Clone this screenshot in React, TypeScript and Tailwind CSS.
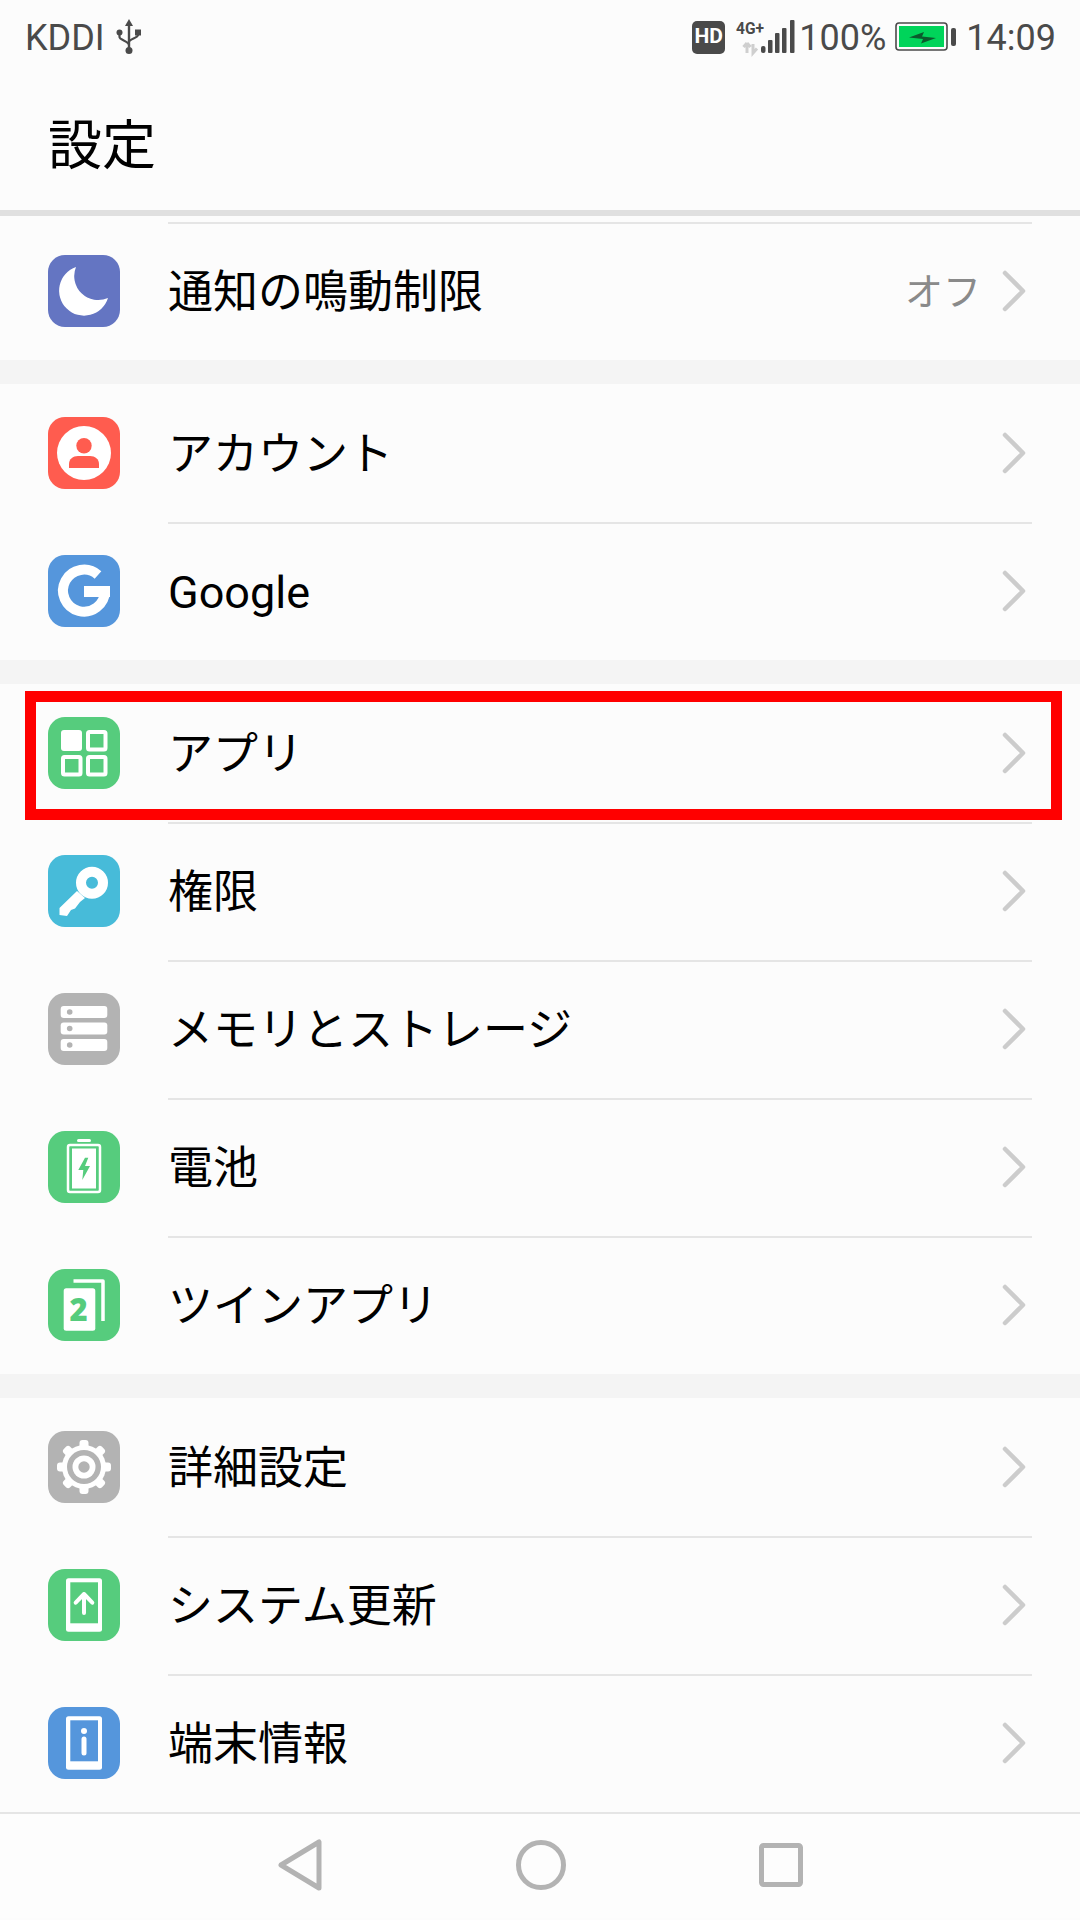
import React from 'react';

const Tile: React.FC<{ color: string; children: React.ReactNode }> = ({ color, children }) => (
  <svg width="72" height="72" viewBox="0 0 72 72" className="shrink-0">
    <rect width="72" height="72" rx="17" fill={color} />
    {children}
  </svg>
);

const GREEN = '#56cc7d';
const BLUE = '#5596dc';
const GRAY = '#b3b3b3';

const MoonIcon = () => (
  <Tile color="#6475c2">
    <path d="M28 12A25 25 0 1 0 60 43A24 24 0 0 1 28 12Z" fill="#fff" />
  </Tile>
);

const AccountIcon = () => (
  <Tile color="#ff5c4f">
    <circle cx="36" cy="36" r="27" fill="#fff" />
    <circle cx="36" cy="28.7" r="7.7" fill="#ff5c4f" />
    <path d="M21 51V47C21 42 25 39 30 39H42C47 39 51 42 51 47V51Z" fill="#ff5c4f" />
  </Tile>
);

const GoogleIcon = () => (
  <Tile color={BLUE}>
    <path d="M50 20A21 21 0 1 0 57 36" fill="none" stroke="#fff" strokeWidth="10" />
    <rect x="36" y="31" width="26" height="11" fill="#fff" />
  </Tile>
);

const AppsIcon = () => (
  <Tile color={GREEN}>
    <rect x="13" y="13" width="21" height="21" rx="3" fill="#fff" />
    <rect x="40" y="15" width="17.5" height="17.5" rx="1.5" fill="none" stroke="#fff" strokeWidth="4" />
    <rect x="15" y="40" width="17.5" height="17.5" rx="1.5" fill="none" stroke="#fff" strokeWidth="4" />
    <rect x="40" y="40" width="17.5" height="17.5" rx="1.5" fill="none" stroke="#fff" strokeWidth="4" />
  </Tile>
);

const KeyIcon = () => (
  <Tile color="#47bbd9">
    <path d="M29 36L11.5 53V60L19 61L23 55L27 53.5L32 47L37 43Z" fill="#fff" />
    <circle cx="44" cy="27.7" r="11" fill="none" stroke="#fff" strokeWidth="10" />
  </Tile>
);

const StorageIcon = () => (
  <Tile color={GRAY}>
    {[13, 29.5, 46].map((y) => (
      <g key={y}>
        <rect x="12.7" y={y} width="46.6" height="12" rx="3" fill="#fff" />
        <circle cx="21.7" cy={y + 6} r="2.8" fill={GRAY} />
      </g>
    ))}
  </Tile>
);

const BatteryIcon = () => (
  <Tile color={GREEN}>
    <rect x="29" y="8" width="14" height="3" rx="1.5" fill="#fff" />
    <rect x="20" y="14" width="32" height="47" rx="2" fill="none" stroke="#fff" strokeWidth="2.5" />
    <rect x="24" y="17.5" width="24" height="40" fill="#fff" />
    <path d="M37 26.7L30.3 39H35.3L34.3 49L42 35H37L40.3 26.7Z" fill={GREEN} />
  </Tile>
);

const TwinIcon = () => (
  <Tile color={GREEN}>
    <path d="M25.5 12H55V52" fill="none" stroke="#fff" strokeWidth="3.5" strokeLinejoin="round" />
    <rect x="15.7" y="19.3" width="31.6" height="42.4" rx="2.5" fill="#fff" />
    <text x="30.5" y="51.5" textAnchor="middle" fontSize="31" fontWeight="900" fill={GREEN} fontFamily="'Noto Sans', sans-serif">
      2
    </text>
  </Tile>
);

const GearIcon = () => (
  <Tile color={GRAY}>
    {[0, 45, 90, 135].map((a) => (
      <rect key={a} x="31.5" y="9" width="9" height="54" rx="3" fill="#fff" transform={`rotate(${a} 36 36)`} />
    ))}
    <circle cx="36" cy="36" r="22" fill="#fff" />
    <circle cx="36" cy="36" r="17" fill={GRAY} />
    <circle cx="36" cy="36" r="11.5" fill="#fff" />
    <circle cx="36" cy="36" r="5.7" fill={GRAY} />
  </Tile>
);

const UpdateIcon = () => (
  <Tile color={GREEN}>
    <rect x="18" y="9.3" width="36" height="53.4" rx="2.5" fill="#fff" />
    <rect x="22.3" y="13.3" width="27.7" height="41" fill={GREEN} />
    <path d="M36 44V25M27.7 33.7L36 25L44.3 33.7" fill="none" stroke="#fff" strokeWidth="4" strokeLinecap="round" strokeLinejoin="round" />
  </Tile>
);

const InfoIcon = () => (
  <Tile color={BLUE}>
    <rect x="18" y="9.3" width="36" height="53.4" rx="2.5" fill="#fff" />
    <rect x="22.3" y="13.3" width="27.7" height="41" fill={BLUE} />
    <circle cx="36" cy="24" r="3" fill="#fff" />
    <path d="M36 32V46" fill="none" stroke="#fff" strokeWidth="5" strokeLinecap="round" />
  </Tile>
);

const Chevron = () => (
  <svg width="24" height="42" viewBox="0 0 24 42" className="shrink-0">
    <path d="M3 3L21 21L3 39" fill="none" stroke="#cccccc" strokeWidth="4.5" strokeLinecap="round" strokeLinejoin="round" />
  </svg>
);

type RowProps = {
  icon: React.ReactNode;
  label: string;
  value?: string;
  divider?: boolean;
  highlighted?: boolean;
};

const Row: React.FC<RowProps> = ({ icon, label, value, divider = true, highlighted }) => (
  <div className="relative h-[138px] flex items-center pl-12 bg-[#fcfcfc]">
    {icon}
    <div className={`flex-1 self-stretch ml-[48px] mr-[48px] flex items-center ${divider ? 'border-t-2 border-[#e5e5e5]' : 'border-t-2 border-transparent'}`}>
      <span className="flex-1 text-[45px] text-[#000000] leading-none">{label}</span>
      {value && <span className="text-[38px] text-[#8a8a8a] mr-[21px] leading-none">{value}</span>}
      <div className="mr-[6px] mb-[3px]">
        <Chevron />
      </div>
    </div>
    {highlighted && (
      <div className="absolute left-[25px] top-[7px] w-[1037px] h-[129px] border-[11px] border-[#ff0000]" />
    )}
  </div>
);

const Gap = () => <div className="h-[24px] bg-[#f4f4f4]" />;

const UsbIcon = () => (
  <svg width="26" height="36" viewBox="0 0 26 36" className="ml-[11px]">
    <g fill="#4a4a4a">
      <path d="M13 0L17 7H9Z" />
      <rect x="11.8" y="5" width="2.4" height="26" />
      <circle cx="13" cy="31.5" r="3.5" />
      <circle cx="3.5" cy="13.5" r="3" />
      <rect x="19" y="10.5" width="6" height="6" />
    </g>
    <path d="M3.5 14V18C3.5 21 13 22 13 26M22 14V16C22 19 13 20 13 23" fill="none" stroke="#4a4a4a" strokeWidth="2.2" />
  </svg>
);

const SignalIcon = () => (
  <svg width="60" height="34" viewBox="0 0 60 34" className="ml-[11px] overflow-visible">
    <text x="0" y="14" fontSize="17" fontWeight="700" fill="#4a4a4a" fontFamily="'Roboto', sans-serif" textLength="28" lengthAdjust="spacingAndGlyphs">
      4G+
    </text>
    <path d="M11 33V23M11 23L7.5 27M11 23L14.5 27M17 24V33L21 28.5" fill="none" stroke="#cfcfcf" strokeWidth="3" />
    <rect x="25" y="26" width="4.5" height="7" rx="2" fill="#4a4a4a" />
    <rect x="32" y="20" width="4.5" height="13" rx="1" fill="#4a4a4a" />
    <rect x="39" y="13" width="4.5" height="20" rx="1" fill="#4a4a4a" />
    <rect x="46" y="8" width="4.5" height="25" rx="1" fill="#4a4a4a" />
    <rect x="54" y="0" width="4.5" height="33" rx="1" fill="#4a4a4a" />
  </svg>
);

const BatteryStatus = () => (
  <svg width="61" height="30" viewBox="0 0 61 30" className="ml-[9px]">
    <rect x="1" y="1" width="51" height="27" rx="3" fill="none" stroke="#4a4a4a" strokeWidth="1.6" />
    <rect x="4" y="4" width="45" height="21" fill="#00d45a" />
    <path d="M14 15.5L29 10L27 14.5L41 16L26 21.5L28 17Z" fill="#0b5a2d" />
    <rect x="56" y="6" width="5" height="18" rx="2" fill="#4a4a4a" />
  </svg>
);

const NavBar = () => (
  <div className="h-[106px] border-t-2 border-[#e5e5e5] bg-[#fdfdfd] flex items-center justify-center gap-[194px] pb-[2px]">
    <svg width="44" height="52" viewBox="0 0 44 52">
      <path d="M3 26L41 3V49Z" fill="none" stroke="#b3b3b3" strokeWidth="5" strokeLinejoin="round" />
    </svg>
    <svg width="50" height="50" viewBox="0 0 50 50">
      <circle cx="25" cy="25" r="22.5" fill="none" stroke="#b3b3b3" strokeWidth="5" />
    </svg>
    <svg width="44" height="44" viewBox="0 0 44 44" className="-ml-px">
      <rect x="2.5" y="2.5" width="39" height="39" rx="2" fill="none" stroke="#b3b3b3" strokeWidth="5" />
    </svg>
  </div>
);

const App: React.FC = () => {
  return (
    <div className="w-[1080px] h-[1920px] flex flex-col overflow-hidden bg-[#fcfcfc] font-['Roboto','Noto_Sans_CJK_JP',sans-serif]">
      {/* Status bar */}
      <div className="h-[74px] flex items-center pl-[25px] pr-[24px] text-[#4a4a4a]">
        <span className="text-[36px] leading-none mt-[2px]">KDDI</span>
        <UsbIcon />
        <div className="ml-auto flex items-center">
          <span className="w-[33px] h-[33px] rounded-[5px] bg-[#4a4a4a] text-white text-[21px] font-bold flex items-center justify-center">HD</span>
          <SignalIcon />
          <span className="text-[36px] leading-none ml-[3px] mt-[2px]">100%</span>
          <BatteryStatus />
          <span className="text-[36px] leading-none ml-[10px] mt-[2px]">14:09</span>
        </div>
      </div>

      {/* Title */}
      <div className="h-[142px] pl-[48px] pt-[9px] flex items-center border-b-[6px] border-[#e0e0e0]">
        <h1 className="text-[54px] font-normal leading-none text-black">設定</h1>
      </div>
      <div className="h-[6px]" />

      <Row icon={<MoonIcon />} label="通知の鳴動制限" value="オフ" />
      <Gap />
      <Row icon={<AccountIcon />} label="アカウント" divider={false} />
      <Row icon={<GoogleIcon />} label="Google" />
      <Gap />
      <Row icon={<AppsIcon />} label="アプリ" divider={false} highlighted />
      <Row icon={<KeyIcon />} label="権限" />
      <Row icon={<StorageIcon />} label="メモリとストレージ" />
      <Row icon={<BatteryIcon />} label="電池" />
      <Row icon={<TwinIcon />} label="ツインアプリ" />
      <Gap />
      <Row icon={<GearIcon />} label="詳細設定" divider={false} />
      <Row icon={<UpdateIcon />} label="システム更新" />
      <Row icon={<InfoIcon />} label="端末情報" />
      <NavBar />
    </div>
  );
};

export default App;
